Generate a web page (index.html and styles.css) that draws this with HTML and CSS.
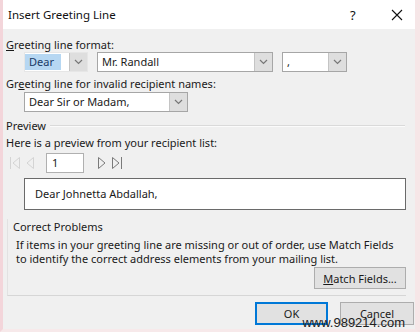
FILE: index.html
```html
<!DOCTYPE html>
<html lang="en">
<head>
    <meta charset="UTF-8">
    <title>Insert Greeting Line</title>
    <link rel="stylesheet" href="styles.css">
</head>
<body>
    <div class="window">
        <div class="titlebar">
            <span class="title">Insert Greeting Line</span>
            <span class="help">?</span>
            <span class="close">
                <svg width="12" height="12" viewBox="0 0 12 12"><path d="M1 1 L11 11 M11 1 L1 11" stroke="#111" stroke-width="1.1" fill="none"/></svg>
            </span>
        </div>

        <div class="content">
            <div class="label"><u>G</u>reeting line format:</div>
            <div class="combo-row">
                <div class="combo combo-dear">
                    <span class="value"><span class="selected">Dear</span></span>
                    <span class="arrow"><svg width="9" height="6" viewBox="0 0 9 6"><path d="M1 1 L4.5 4.5 L8 1" stroke="#777" stroke-width="1.2" fill="none"/></svg></span>
                </div>
                <div class="combo combo-name">
                    <span class="value">Mr. Randall</span>
                    <span class="arrow"><svg width="9" height="6" viewBox="0 0 9 6"><path d="M1 1 L4.5 4.5 L8 1" stroke="#777" stroke-width="1.2" fill="none"/></svg></span>
                </div>
                <div class="combo combo-punct">
                    <span class="value">,</span>
                    <span class="arrow"><svg width="9" height="6" viewBox="0 0 9 6"><path d="M1 1 L4.5 4.5 L8 1" stroke="#777" stroke-width="1.2" fill="none"/></svg></span>
                </div>
            </div>

            <div class="label label-invalid">Gr<u>e</u>eting line for invalid recipient names:</div>
            <div class="combo-row">
                <div class="combo combo-invalid">
                    <span class="value">Dear Sir or Madam,</span>
                    <span class="arrow"><svg width="9" height="6" viewBox="0 0 9 6"><path d="M1 1 L4.5 4.5 L8 1" stroke="#777" stroke-width="1.2" fill="none"/></svg></span>
                </div>
            </div>

            <div class="group-head">
                <span>Preview</span>
                <span class="rule"></span>
            </div>
            <div class="text">Here is a preview from your recipient list:</div>
            <div class="nav-row">
                <span class="nav-btn disabled">
                    <svg width="12" height="14" viewBox="0 0 12 14"><path d="M1.5 1 V13" stroke="#d4d4d4" fill="none"/><path d="M10.5 1.5 L4 7 L10.5 12.5 Z" stroke="#d4d4d4" fill="none"/></svg>
                </span>
                <span class="nav-btn disabled">
                    <svg width="12" height="14" viewBox="0 0 12 14"><path d="M9.5 1.5 L3 7 L9.5 12.5 Z" stroke="#d4d4d4" fill="none"/></svg>
                </span>
                <span class="record">1</span>
                <span class="nav-btn next">
                    <svg width="12" height="14" viewBox="0 0 12 14"><path d="M2.5 1.5 L9 7 L2.5 12.5 Z" stroke="#7a7a7a" fill="none"/></svg>
                </span>
                <span class="nav-btn">
                    <svg width="12" height="14" viewBox="0 0 12 14"><path d="M1.5 1.5 L8 7 L1.5 12.5 Z" stroke="#7a7a7a" fill="none"/><path d="M10.5 1 V13" stroke="#7a7a7a" fill="none"/></svg>
                </span>
            </div>
            <div class="preview-box">Dear Johnetta Abdallah,</div>

            <div class="problems">
                <div class="group-head problems-head">
                    <span>Correct Problems</span>
                </div>
                <p class="problems-text">If items in your greeting line are missing or out of order, use Match Fields<br>to identify the correct address elements from your mailing list.</p>
                <div class="button-row">
                    <button class="btn btn-match"><u>M</u>atch Fields...</button>
                </div>
            </div>

            <div class="button-row footer">
                <button class="btn btn-ok">OK</button>
                <button class="btn btn-cancel">Cancel</button>
            </div>
        </div>

        <div class="watermark">www.989214.com</div>
    </div>
</body>
</html>
```

FILE: styles.css
```css
body {
    margin: 0;
    font-family: "Noto Sans", sans-serif;
    font-size: 11px;
    color: #1a1a1a;
    background-color: #f6e4e6;
}

.window {
    position: relative;
    width: 412px;
    height: 329px;
    border-left: 3px solid #f3d5da;
    border-right: 5px solid #f6e6e7;
    border-bottom: 3px solid #f7e9ea;
    background-color: #f0f0f0;
    display: flex;
    flex-direction: column;
    overflow: hidden;
}

.titlebar {
    height: 29px;
    background-color: #fff;
    display: flex;
    align-items: center;
    padding-left: 5px;
    flex-shrink: 0;
}

.title {
    flex: 1;
    font-size: 11.5px;
    color: #111;
}

.help {
    width: 14px;
    margin-right: 27px;
    font-size: 13px;
    color: #111;
}

.close {
    display: flex;
    width: 12px;
    margin-right: 12px;
}

.content {
    padding: 8px 9px 0 3px;
}

.label {
    line-height: 15px;
}

.label-invalid {
    margin-top: 4px;
    margin-bottom: 1px;
}

.combo-row {
    display: flex;
    gap: 9px;
    padding-left: 18px;
}

.combo {
    height: 20px;
    box-sizing: border-box;
    border: 1px solid #a6a6a6;
    background-color: #fff;
    display: flex;
}

.combo .value {
    flex: 1;
    padding-left: 4px;
    line-height: 18px;
    overflow: hidden;
    white-space: nowrap;
}

.combo .arrow {
    width: 17px;
    background-color: #dedede;
    border-left: 1px solid #c4c4c4;
    display: flex;
    align-items: center;
    justify-content: center;
}

.combo-dear {
    width: 64px;
    border-color: #e6e6e6;
}

.combo-dear .value {
    padding: 1px 0 1px 0;
    line-height: 16px;
}

.combo-dear .selected {
    display: inline-block;
    background-color: #b6d7f2;
    padding: 0 7px 0 4px;
    color: #1a3a66;
}

.combo-name {
    width: 176px;
}

.combo-punct {
    width: 65px;
}

.combo-invalid {
    width: 164px;
    height: 20px;
}

.group-head {
    display: flex;
    align-items: center;
    gap: 4px;
    margin-top: 6px;
    line-height: 15px;
}

.group-head .rule {
    flex: 1;
    height: 1px;
    background-color: #dadada;
    border-bottom: 1px solid #fbfbfb;
    margin-right: 1px;
}

.text {
    margin-top: 3px;
    line-height: 14px;
}

.nav-row {
    display: flex;
    align-items: center;
    margin-top: 3px;
    height: 20px;
}

.nav-btn {
    display: flex;
    width: 12px;
    margin-left: 3px;
}

.nav-btn.next {
    margin-left: 12px;
}

.record {
    margin-left: 10px;
    width: 38px;
    height: 20px;
    box-sizing: border-box;
    border: 1px solid #b0b0b0;
    background-color: #fff;
    padding-left: 5px;
    line-height: 18px;
}

.preview-box {
    margin: 5px 0 0 18px;
    height: 32px;
    box-sizing: border-box;
    border: 1px solid #6a6a6a;
    background-color: #fff;
    padding-left: 10px;
    line-height: 30px;
}

.problems {
    margin: 9px 0 0 1px;
    border-left: 1px solid #e2e2e2;
    border-bottom: 1px solid #d6d6d6;
    padding: 0 0 6px 5px;
}

.problems-head {
    margin-top: 0;
}

.problems-text {
    margin: 4px 0 0 3px;
    line-height: 14px;
    white-space: nowrap;
}

.button-row {
    display: flex;
    justify-content: flex-end;
    gap: 12px;
}

.btn {
    font-family: "Noto Sans", sans-serif;
    font-size: 11px;
    color: #1a1a1a;
    background-color: #e1e1e1;
    border: 1px solid #adadad;
    padding: 0;
    height: 22px;
}

.btn-match {
    width: 92px;
    margin-top: 1px;
}

.footer {
    margin: 6px -8px 0 0;
}

.btn-ok {
    width: 73px;
    height: 23px;
    border: 2px solid #0078d7;
}

.btn-cancel {
    width: 74px;
    height: 23px;
}

.watermark {
    position: absolute;
    right: 10px;
    bottom: 0;
    font-family: "Liberation Sans", Arial, sans-serif;
    font-size: 13px;
    color: #222;
    line-height: 13px;
}
```
